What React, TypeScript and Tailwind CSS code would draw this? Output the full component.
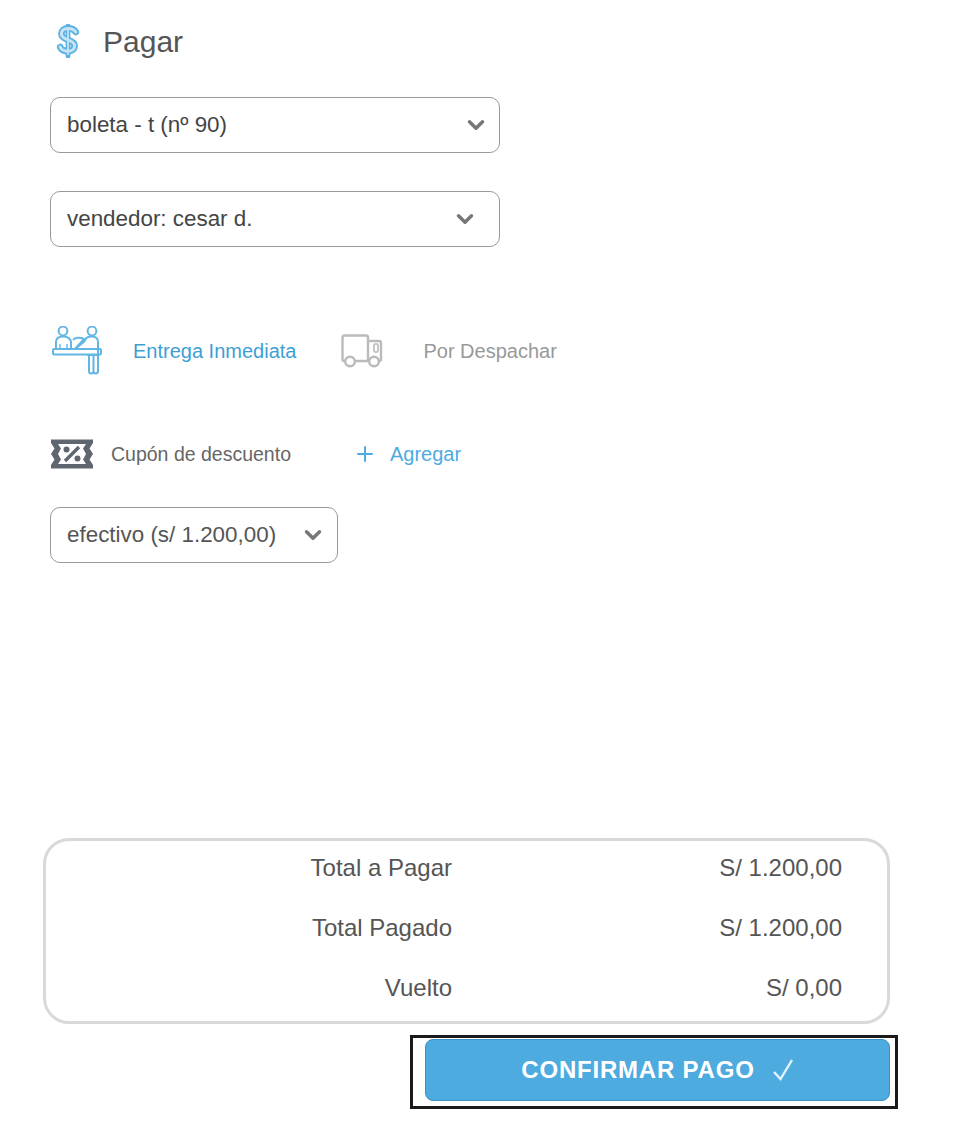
import { ChevronDown, Plus } from "lucide-react";

const FUENTE = "font-['Liberation_Sans',Arial,sans-serif]";

function Selector({ texto, ancho, margen }: { texto: string; ancho: string; margen: string }) {
  return (
    <div className={`flex h-[56px] items-center justify-between rounded-[10px] border border-[#999] pl-[16px] text-[22.4px] text-[#444] ${ancho} ${margen}`}>
      <span>{texto}</span>
      <ChevronDown size={26} strokeWidth={3.2} className="text-[#777]" />
    </div>
  );
}

function IconoDolar() {
  const s = "M33 12 C30 7 25 6 20 6 C13 6 9 10 9 15 C9 21 14 23 20 25 C26 27 31 29 31 35 C31 41 26 44 20 44 C14 44 9 42 7 37";
  return (
    <svg width="24" height="34" viewBox="0 0 40 54" fill="none" strokeLinecap="round">
      <path d={s} stroke="#5ab2e2" strokeWidth="11" />
      <path d="M20 2 V52" stroke="#5ab2e2" strokeWidth="8" />
      <path d="M20 5 V49" stroke="#c4e4f6" strokeWidth="3" />
      <path d={s} stroke="#c4e4f6" strokeWidth="5" />
    </svg>
  );
}

function IconoEntrega() {
  return (
    <svg width="52" height="50" viewBox="0 0 52 50" fill="none" stroke="#62b6e4" strokeWidth="2" strokeLinejoin="round">
      <circle cx="12" cy="5" r="4.4" />
      <circle cx="41" cy="5" r="4.4" />
      <path d="M5 23 V16 C5 12 8 10.500 12 10.500 C17 10.500 20 12 20 17 V23" />
      <path d="M9 23 V18 M16 23 V18" strokeWidth="1.400" />
      <path d="M22 14 C24 11.500 29 11 33 13 L24 23 L34 15" />
      <path d="M34 15 C34 12 37 10.500 41 10.500 C45 10.500 47 12 47 16 V29 H36" />
      <rect x="2" y="23" width="48" height="5.500" rx="1" />
      <path d="M38 29 V45 Q38 47.500 40.200 47.500 Q42.500 47.500 42.500 45 V29 M42.500 45 Q42.500 47.500 44.700 47.500 Q47 47.500 47 45 V29" />
    </svg>
  );
}

function IconoCamion() {
  return (
    <svg width="42" height="34" viewBox="0 0 42 34" fill="none" stroke="#bbbbbb" strokeWidth="2.400" strokeLinejoin="round">
      <path d="M4 27 H3 Q1.500 27 1.500 25 V3.500 Q1.500 1.500 3.500 1.500 H25 Q27 1.500 27 3.500 V27 H14" />
      <path d="M27 7 H38 Q40 7 40 9 V25 Q40 27 38 27 M27 27 H29" />
      <rect x="33" y="10" width="4" height="8" rx="1" strokeWidth="1.600" />
      <circle cx="9" cy="27.500" r="4.800" />
      <circle cx="33" cy="27.500" r="4.800" />
    </svg>
  );
}

function IconoCupon() {
  return (
    <svg width="44" height="30" viewBox="0 0 44 30" fill="none">
      <path
        d="M1 0.500 H43 V4 L39.500 9.500 L43 15 L39.500 20.500 L43 26 V29.500 H1 V26 L4.500 20.500 L1 15 L4.500 9.500 L1 4 Z M8 5 L11 9.500 L8 15 L11 20.500 L8 25 H36 L33 20.500 L36 15 L33 9.500 L36 5 Z"
        fill="#5f6670"
        fillRule="evenodd"
      />
      <circle cx="16.500" cy="10.500" r="3" fill="#5f6670" />
      <circle cx="27.500" cy="19.500" r="3" fill="#5f6670" />
      <path d="M15 22 L29 8" stroke="#5f6670" strokeWidth="3.400" />
    </svg>
  );
}

function IconoCheck() {
  return (
    <svg width="22" height="24" viewBox="0 0 22 24" fill="none" stroke="#e4f2fb" strokeWidth="2.400" className="ml-[17px]">
      <path d="M2 14 L8.500 21 L20 2" />
    </svg>
  );
}

function Fila({ nombre, valor, margen }: { nombre: string; valor: string; margen?: string }) {
  return (
    <div className={`flex h-[28px] items-center text-[24px] text-[#555] ${margen ?? ""}`}>
      <span className="w-[406px] text-right">{nombre}</span>
      <span className="w-[390px] text-right">{valor}</span>
    </div>
  );
}

export default function App() {
  return (
    <main className={`h-[1147px] w-[968px] bg-white ${FUENTE}`}>
      <div className="pl-[50px] pt-[20px]">
        <div className="flex h-[42px] items-center text-[30px] text-[#555]">
          <span className="ml-[6px]"><IconoDolar /></span>
          <span className="ml-[23px]">Pagar</span>
        </div>

        <Selector texto="boleta - t (nº 90)" ancho="w-[450px] pr-[10px]" margen="mt-[35px]" />
        <Selector texto="vendedor: cesar d." ancho="w-[450px] pr-[21px]" margen="mt-[38px]" />

        <div className="mt-[79px] flex h-[50px] items-center text-[20px]">
          <span className="ml-[1px]"><IconoEntrega /></span>
          <span className="ml-[30px] text-[#3c9fd4]">Entrega Inmediata</span>
          <span className="ml-[45px]"><IconoCamion /></span>
          <span className="ml-[40px] text-[#999]">Por Despachar</span>
        </div>

        <div className="mt-[63px] flex h-[30px] items-center">
          <IconoCupon />
          <span className="ml-[17px] pt-[2px] text-[19.500px] text-[#666]">Cupón de descuento</span>
          <Plus size={24} strokeWidth={2} className="ml-[62px] text-[#4dabe0]" />
          <span className="ml-[13px] text-[20px] text-[#4dabe0]">Agregar</span>
        </div>

        <Selector texto="efectivo (s/ 1.200,00)" ancho="w-[288px] pr-[11px]" margen="mt-[38px] !text-[#555]" />
      </div>

      <div className="ml-[43px] mt-[275px] flex h-[186px] w-[847px] flex-col justify-center rounded-[26px] border-[3px] border-[#d9d9d9] pb-[6px]">
        <Fila nombre="Total a Pagar" valor="S/ 1.200,00" />
        <Fila nombre="Total Pagado" valor="S/ 1.200,00" margen="mt-[32px]" />
        <Fila nombre="Vuelto" valor="S/ 0,00" margen="mt-[32px]" />
      </div>

      <div className="ml-[410px] mt-[11px] w-[488px] border-[3px] border-[#1a1a1a] pb-[5px] pl-[12px] pr-[5px] pt-[1px]">
        <button className="flex h-[62px] w-[465px] items-center justify-center rounded-[8px] border border-[#3e8fc4] bg-[#4dabe0] text-[24px] font-bold tracking-[0.8px] text-white">
          CONFIRMAR PAGO
          <IconoCheck />
        </button>
      </div>
    </main>
  );
}
